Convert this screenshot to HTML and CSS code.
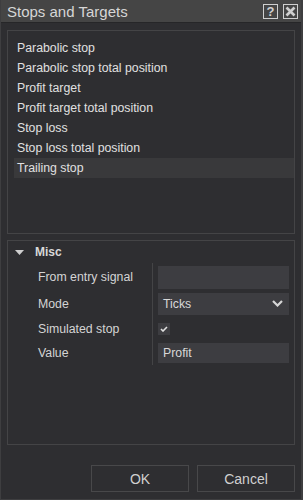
FILE: index.html
```html
<!DOCTYPE html>
<html lang="en">
<head>
  <meta charset="UTF-8">
  <meta name="viewport" content="width=device-width, initial-scale=1.0">
  <title>Stops and Targets</title>
  <link rel="stylesheet" href="styles.css">
</head>
<body>
  <div class="window">
    <div class="titlebar">
      <span class="title">Stops and Targets</span>
      <span class="tbtn help">?</span>
      <span class="tbtn close">
        <svg width="11" height="11" viewBox="0 0 11 11"><path d="M1.5 1.5 L9.5 9.5 M9.5 1.5 L1.5 9.5" stroke="#cfcfcf" stroke-width="2.6"/></svg>
      </span>
    </div>
    <div class="content">
      <div class="list">
        <div class="item">Parabolic stop</div>
        <div class="item">Parabolic stop total position</div>
        <div class="item">Profit target</div>
        <div class="item">Profit target total position</div>
        <div class="item">Stop loss</div>
        <div class="item">Stop loss total position</div>
        <div class="item selected">Trailing stop</div>
      </div>
      <div class="props">
        <div class="group">
          <svg class="caret" width="9" height="5" viewBox="0 0 9 5"><path d="M0 0 H9 L4.5 5 Z" fill="#cfcfcf"/></svg>
          <span>Misc</span>
        </div>
        <div class="grid">
          <div class="label r1">From entry signal</div>
          <div class="cell r1"><div class="field"></div></div>
          <div class="label r2">Mode</div>
          <div class="cell r2">
            <div class="field select">Ticks
              <svg width="11" height="7" viewBox="0 0 11 7"><path d="M1 1 L5.5 5.5 L10 1" stroke="#d6d6d6" stroke-width="2.2" fill="none"/></svg>
            </div>
          </div>
          <div class="label r3">Simulated stop</div>
          <div class="cell r3">
            <div class="check"><svg width="8" height="6" viewBox="0 0 8 6"><path d="M1 3 L3 5 L7 1" stroke="#e0e0e0" stroke-width="1.6" fill="none"/></svg></div>
          </div>
          <div class="label r4">Value</div>
          <div class="cell r4"><div class="field small">Profit</div></div>
        </div>
      </div>
      <div class="buttons">
        <div class="btn">OK</div>
        <div class="btn">Cancel</div>
      </div>
    </div>
  </div>
</body>
</html>
```

FILE: styles.css
```css
body { margin: 0; background: #2d2d30; font-family: "Liberation Sans", Arial, sans-serif; font-size: 12px; color: #d8d8d8; }
.window { width: 303px; height: 500px; box-sizing: border-box; background: #2e2e31; border-left: 1px solid #3e3e40; border-right: 2px solid #3e3e40; border-bottom: 1px solid #3e3e40; }
.titlebar { height: 23px; display: flex; align-items: center; background: #454545; border-bottom: 1px solid #262628; padding-left: 6px; box-sizing: border-box; }
.title { flex: 1; font-size: 15px; color: #d6d6d6; }
.tbtn { width: 13px; height: 13px; border: 1px solid #cfcfcf; display: flex; align-items: center; justify-content: center; font-size: 13px; font-weight: bold; color: #d0d0d0; margin-right: 5px; }
.close { margin-right: 3px; }
.content { padding: 7px 6px 0 6px; }
.list { height: 204px; box-sizing: border-box; border: 1px solid #444446; padding: 7px 0 0 6px; }
.item { height: 20px; line-height: 20px; padding-left: 3px; font-size: 12.3px; color: #e0e0e0; }
.item.selected { background: #39393b; }
.props { height: 205px; box-sizing: border-box; border: 1px solid #444446; margin-top: 6px; padding-left: 6px; }
.group { height: 22px; display: flex; align-items: center; font-weight: bold; font-size: 12px; color: #d8d8d8; }
.caret { margin: 1px 11px 0 1px; }
.grid { display: grid; grid-template-columns: 113px 1px 137px; grid-template-rows: 28px 25px 25px 24px; margin-left: 24px; }
.label { grid-column: 1; display: flex; align-items: center; color: #d4d4d4; font-size: 12.3px; }
.cell { grid-column: 3; display: flex; align-items: center; padding-left: 5px; border-left: 1px solid #444446; }
.r1 { grid-row: 1; } .r2 { grid-row: 2; } .r3 { grid-row: 3; } .r4 { grid-row: 4; }
.field { width: 131px; height: 23px; background: #3d3d41; box-sizing: border-box; display: flex; align-items: center; justify-content: space-between; padding: 0 6px 0 5px; color: #d8d8d8; font-size: 12.3px; }
.field.select { height: 22px; }
.field.small { height: 20px; }
.check { width: 12px; height: 12px; background: #3d3d41; display: flex; align-items: center; justify-content: center; }
.buttons { display: flex; justify-content: flex-end; gap: 8px; margin-top: 20px; }
.btn { width: 98px; height: 27px; box-sizing: border-box; border: 1px solid #48484a; display: flex; align-items: center; justify-content: center; font-size: 14px; color: #d0d0d0; }
```
